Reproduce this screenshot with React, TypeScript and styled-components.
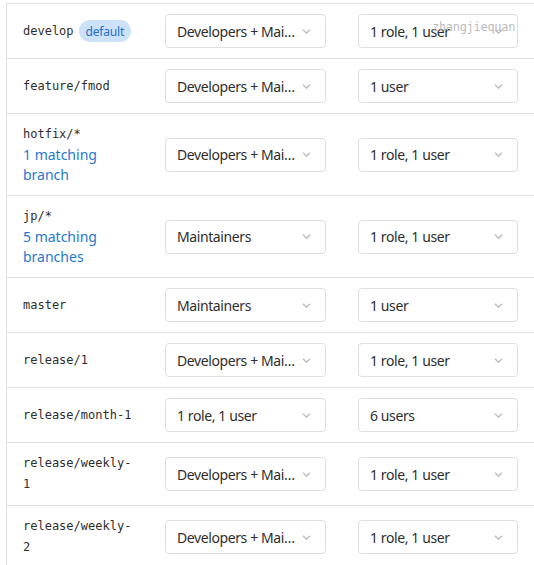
import React from "react";
import styled, { createGlobalStyle } from "styled-components";

const Global = createGlobalStyle`
  html, body { margin: 0; padding: 0; background: #ffffff; }
  body { font-family: "Noto Sans", "Open Sans", sans-serif; color: #2e2e2e; }
`;

const Page = styled.div`
  position: relative;
  padding: 3px 0 0 6px;
  width: 534px;
  height: 565px;
  box-sizing: border-box;
  overflow: hidden;
`;

const Table = styled.div`
  border-left: 1px solid #e1e1e1;
  display: grid;
  grid-template-columns: 142px 193px 1fr;
`;

const Cell = styled.div`
  border-top: 1px solid #e1e1e1;
  padding: 10px 16px;
  display: flex;
  flex-direction: column;
  justify-content: center;
  min-height: 34px;
`;

const NameLine = styled.div`
  display: flex;
  align-items: center;
  white-space: nowrap;
`;

const Code = styled.code`
  font-family: "DejaVu Sans Mono", "Liberation Mono", monospace;
  font-size: 12px;
  line-height: 21px;
  color: #2e2e2e;
  white-space: normal;
  word-break: break-word;
`;

const Badge = styled.span`
  display: inline-flex;
  align-items: center;
  height: 22px;
  padding: 0 7px;
  margin-left: 5px;
  border-radius: 11px;
  background: #cbe2f9;
  color: #1f6fc5;
  font-family: "Noto Sans", sans-serif;
  font-size: 12px;
  letter-spacing: -0.2px;
`;

const Matching = styled.a`
  font-family: "Noto Sans", sans-serif;
  font-size: 14px;
  line-height: 20px;
  color: #1f78d1;
  text-decoration: none;
`;

const Select = styled.div`
  box-sizing: border-box;
  height: 34px;
  border: 1px solid #dfdfdf;
  border-radius: 4px;
  display: flex;
  align-items: center;
  padding: 0 12px 0 11px;
  background: #fff;
`;

const SelectLabel = styled.span`
  flex: 1;
  min-width: 0;
  white-space: nowrap;
  overflow: hidden;
  text-overflow: ellipsis;
  font-family: "Noto Sans", sans-serif;
  font-size: 14px;
  letter-spacing: -0.4px;
  color: #2e2e2e;
  padding-right: 5px;
`;

const Chevron = styled.svg`
  width: 9px;
  height: 5px;
  flex: none;
  margin-right: 2px;
`;

const Watermark = styled.span`
  position: absolute;
  left: 432px;
  top: 20px;
  font-family: "DejaVu Sans Mono", monospace;
  font-size: 12px;
  letter-spacing: -0.3px;
  color: #bdbdbd;
  pointer-events: none;
`;

type Row = {
  name: string;
  badge?: string;
  matching?: string;
  merge: string;
  push: string;
};

const rows: Row[] = [
  { name: "develop", badge: "default", merge: "Developers + Maintainers", push: "1 role, 1 user" },
  { name: "feature/fmod", merge: "Developers + Maintainers", push: "1 user" },
  { name: "hotfix/*", matching: "1 matching branch", merge: "Developers + Maintainers", push: "1 role, 1 user" },
  { name: "jp/*", matching: "5 matching branches", merge: "Maintainers", push: "1 role, 1 user" },
  { name: "master", merge: "Maintainers", push: "1 user" },
  { name: "release/1", merge: "Developers + Maintainers", push: "1 role, 1 user" },
  { name: "release/month-1", merge: "1 role, 1 user", push: "6 users" },
  { name: "release/weekly-1", merge: "Developers + Maintainers", push: "1 role, 1 user" },
  { name: "release/weekly-2", merge: "Developers + Maintainers", push: "1 role, 1 user" },
];

const Dropdown = ({ label }: { label: string }) => (
  <Select>
    <SelectLabel>{label}</SelectLabel>
    <Chevron viewBox="0 0 9 5">
      <path d="M1 0.8 L4.5 4.2 L8 0.8" fill="none" stroke="#bcbcbc" strokeWidth="1.4" />
    </Chevron>
  </Select>
);

export default function App() {
  return (
    <Page>
      <Global />
      <Table>
        {rows.map((r) => (
          <React.Fragment key={r.name}>
            <Cell>
              <NameLine>
                <Code>{r.name}</Code>
                {r.badge && <Badge>{r.badge}</Badge>}
              </NameLine>
              {r.matching && <Matching href="#">{r.matching}</Matching>}
            </Cell>
            <Cell>
              <Dropdown label={r.merge} />
            </Cell>
            <Cell>
              <Dropdown label={r.push} />
            </Cell>
          </React.Fragment>
        ))}
      </Table>
      <Watermark>zhangjiequan</Watermark>
    </Page>
  );
}
